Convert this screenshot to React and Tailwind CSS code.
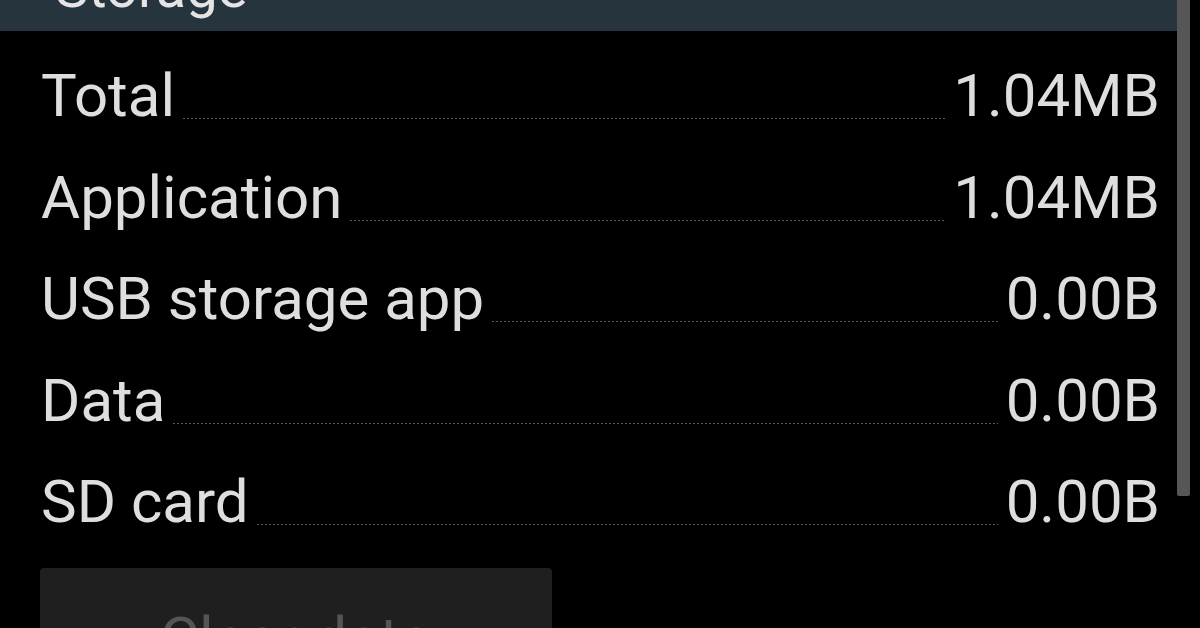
import React from 'react';

const rows = [
  { label: 'Total', value: '1.04MB' },
  { label: 'Application', value: '1.04MB' },
  { label: 'USB storage app', value: '0.00B' },
  { label: 'Data', value: '0.00B' },
  { label: 'SD card', value: '0.00B' },
];

const StorageRow = ({ label, value }) => (
  <div className="flex items-baseline leading-[101.5px] h-[101.5px]">
    <span className="whitespace-nowrap">{label}</span>
    <div className="flex-1 mx-2 h-px translate-y-[3px] bg-[linear-gradient(to_right,#5a5a5a_50%,transparent_50%)] bg-[length:4px_1px] bg-repeat-x" />
    <span className="whitespace-nowrap">{value}</span>
  </div>
);

export default function App() {
  return (
    <div className="w-[1200px] h-[628px] overflow-hidden bg-black flex font-['Roboto',sans-serif] text-[#dedede]">
      <div className="w-[1177px] flex flex-col">
        {/* Section header */}
        <div className="h-[31px] shrink-0 overflow-hidden bg-[#26343e]">
          <div className="mt-[-40px] pl-[55px] text-[56px] leading-[56px] text-[#e4e4e4]">Storage</div>
        </div>

        {/* Storage rows */}
        <div className="pt-[14px] pl-[41px] pr-[17px] text-[60px]">
          {rows.map((row) => (
            <StorageRow key={row.label} label={row.label} value={row.value} />
          ))}
        </div>

        {/* Clear data button */}
        <div className="pl-10 mt-[15px]">
          <button className="w-[512px] h-[110px] pt-[32px] rounded-[4px] bg-[#1f1f1f] text-[60px] leading-[70px] text-[#555555] text-center font-['Roboto',sans-serif] block">
            Clear data
          </button>
        </div>
      </div>

      {/* Scrollbar */}
      <div className="w-[13px] h-[496px] bg-[#565656] rounded-b-[2px]" />
    </div>
  );
}
